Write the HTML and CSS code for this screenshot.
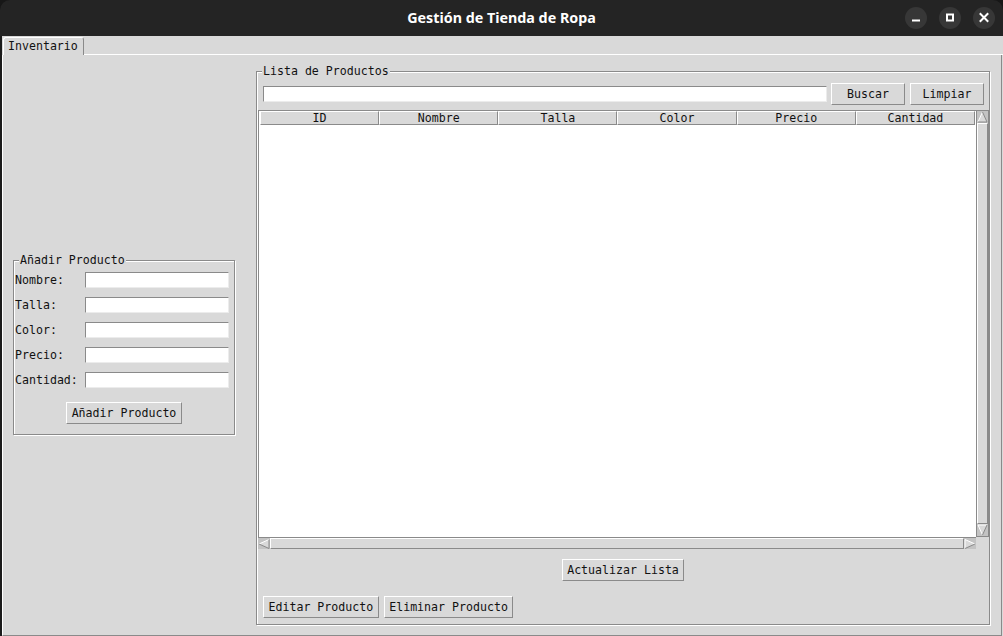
FILE: index.html
```html
<!DOCTYPE html>
<html lang="es">
<head>
<meta charset="utf-8">
<title>Gestión de Tienda de Ropa</title>
<link rel="stylesheet" href="styles.css">
</head>
<body>
<div class="window">
  <header class="titlebar">
    <div class="tb-spacer"></div>
    <div class="title">Gestión de Tienda de Ropa</div>
    <div class="controls">
      <span class="ctl"><svg width="22" height="22" viewBox="0 0 22 22"><rect x="7" y="12.5" width="8" height="2" fill="#fff"/></svg></span>
      <span class="ctl"><svg width="22" height="22" viewBox="0 0 22 22"><rect x="8" y="7.5" width="6" height="6" fill="none" stroke="#fff" stroke-width="2"/></svg></span>
      <span class="ctl"><svg width="22" height="22" viewBox="0 0 22 22"><path d="M7.5 7 L14.5 14 M14.5 7 L7.5 14" stroke="#fff" stroke-width="2" stroke-linecap="square"/></svg></span>
    </div>
  </header>
  <div class="body">
    <div class="tabbar">
      <div class="tab">Inventario</div>
      <div class="tabfill"></div>
    </div>
    <div class="pane">
      <div class="left-col">
        <section class="lframe add-frame">
          <div class="lframe-title">Añadir Producto</div>
          <div class="form-grid">
            <span class="lbl">Nombre:</span><div class="entry"></div>
            <span class="lbl">Talla:</span><div class="entry"></div>
            <span class="lbl">Color:</span><div class="entry"></div>
            <span class="lbl">Precio:</span><div class="entry"></div>
            <span class="lbl">Cantidad:</span><div class="entry"></div>
          </div>
          <div class="add-row"><button class="btn">Añadir Producto</button></div>
        </section>
      </div>
      <div class="right-col">
        <section class="lframe list-frame">
          <div class="lframe-title">Lista de Productos</div>
          <div class="search-row">
            <div class="entry search-entry"></div>
            <button class="btn btn-fixed">Buscar</button>
            <button class="btn btn-fixed btn-gap">Limpiar</button>
          </div>
          <div class="tree-wrap">
            <div class="tree">
              <div class="tree-head">
                <div class="th">ID</div>
                <div class="th">Nombre</div>
                <div class="th">Talla</div>
                <div class="th">Color</div>
                <div class="th">Precio</div>
                <div class="th">Cantidad</div>
              </div>
              <div class="tree-body"></div>
            </div>
            <div class="vscroll">
              <div class="arrow-box v"><svg width="11" height="12" viewBox="0 0 11 12"><polygon points="5.5,1 10,11 1,11" fill="#d9d9d9"/><path d="M1 11 L5.5 1" stroke="#fff" stroke-width="1"/><path d="M5.5 1 L10 11 L1 11" stroke="#8a8a8a" stroke-width="1" fill="none"/></svg></div>
              <div class="thumb"></div>
              <div class="arrow-box v"><svg width="11" height="12" viewBox="0 0 11 12"><polygon points="1,1 10,1 5.5,11" fill="#d9d9d9"/><path d="M5.5 11 L1 1 L10 1" stroke="#fff" stroke-width="1" fill="none"/><path d="M10 1 L5.5 11" stroke="#8a8a8a" stroke-width="1"/></svg></div>
            </div>
            <div class="hscroll">
              <div class="arrow-box h"><svg width="12" height="10" viewBox="0 0 12 10"><polygon points="1,5 11,0.5 11,9.5" fill="#d9d9d9"/><path d="M1 5 L11 0.5" stroke="#fff" stroke-width="1"/><path d="M11 0.5 L11 9.5 L1 5" stroke="#8a8a8a" stroke-width="1" fill="none"/></svg></div>
              <div class="thumb"></div>
              <div class="arrow-box h"><svg width="12" height="10" viewBox="0 0 12 10"><polygon points="1,0.5 11,5 1,9.5" fill="#d9d9d9"/><path d="M1 9.5 L1 0.5 L11 5" stroke="#fff" stroke-width="1" fill="none"/><path d="M11 5 L1 9.5" stroke="#8a8a8a" stroke-width="1"/></svg></div>
            </div>
            <div class="corner"></div>
          </div>
          <div class="center-row"><button class="btn">Actualizar Lista</button></div>
          <div class="action-row">
            <button class="btn">Editar Producto</button>
            <button class="btn">Eliminar Producto</button>
          </div>
        </section>
      </div>
    </div>
  </div>
</div>
</body>
</html>
```

FILE: styles.css
```css
* { box-sizing: border-box; }

html, body {
  margin: 0;
  padding: 0;
  background: #171717;
}

body {
  width: 1003px;
  height: 636px;
  overflow: hidden;
  font-family: "DejaVu Sans Mono", "Liberation Mono", monospace;
  font-size: 11.6px;
  color: #111;
}

.window {
  width: 1003px;
  height: 636px;
  display: flex;
  flex-direction: column;
}

/* ---------- title bar ---------- */
.titlebar {
  height: 36px;
  flex: none;
  background: #242424;
  border-radius: 10px 10px 0 0;
  display: grid;
  grid-template-columns: 1fr auto 1fr;
  align-items: center;
}

.title {
  font-family: "Noto Sans", "Open Sans", sans-serif;
  font-weight: bold;
  font-size: 14.3px;
  color: #ffffff;
  line-height: 18px;
  padding-bottom: 1px;
}

.controls {
  justify-self: end;
  display: flex;
  gap: 12px;
  padding-right: 8px;
  padding-bottom: 1px;
}

.ctl {
  width: 22px;
  height: 22px;
  border-radius: 50%;
  background: #373737;
  display: block;
}

.ctl svg { display: block; }

/* ---------- body ---------- */
.body {
  flex: 1;
  display: flex;
  flex-direction: column;
  background: #d9d9d9;
  border-left: 2px solid #1c1c1c;
}

.tabbar {
  height: 19px;
  flex: none;
  display: flex;
  padding-top: 1px;
}

.tab {
  height: 18px;
  margin-left: 1px;
  padding: 0 5px 0 4px;
  line-height: 17px;
  border-top: 1px solid #fff;
  border-left: 1px solid #fff;
  border-right: 1px solid #8a8a8a;
  border-radius: 3px 3px 0 0;
  background: #d9d9d9;
}

.tabfill {
  flex: 1;
  border-bottom: 1px solid #fff;
}

.pane {
  flex: 1;
  display: flex;
  margin-right: 1px;
  border-left: 1px solid #fff;
  border-right: 1px solid #8a8a8a;
  border-bottom: 1px solid #8a8a8a;
}

/* ---------- labelled frames ---------- */
.lframe {
  display: flex;
  flex-direction: column;
  border: 1px solid #8a8a8a;
  box-shadow: inset 1px 1px 0 #fff, 1px 1px 0 #fff;
}

.lframe-title {
  align-self: flex-start;
  margin: -8px 0 0 5px;
  padding: 0 1px;
  height: 14px;
  line-height: 14px;
  background: #d9d9d9;
  white-space: nowrap;
}

/* ---------- left column ---------- */
.left-col {
  width: 253px;
  flex: none;
  display: flex;
  align-items: center;
  padding-left: 10px;
}

.add-frame {
  width: 222px;
  margin-top: 5px;
  padding-bottom: 10px;
}

.form-grid {
  display: grid;
  grid-template-columns: 70px 144px;
  row-gap: 9px;
  margin-top: 5px;
  padding-left: 1px;
  align-items: center;
}

.lbl {
  line-height: 16px;
  white-space: nowrap;
}

.entry {
  height: 16px;
  background: #fff;
  border-top: 1px solid #8a8a8a;
  border-left: 1px solid #8a8a8a;
  border-bottom: 1px solid #ececec;
  border-right: 1px solid #ececec;
}

.add-row {
  margin-top: 14px;
  display: flex;
  justify-content: center;
}

/* ---------- buttons ---------- */
.btn {
  font: inherit;
  color: #111;
  height: 22px;
  padding: 0 4.5px;
  line-height: 20px;
  background: #d9d9d9;
  border: 1px solid;
  border-color: #fff #8a8a8a #8a8a8a #fff;
  border-radius: 0;
  white-space: nowrap;
}

.btn-fixed {
  width: 74px;
  flex: none;
  padding: 0;
}

.btn-gap { margin-left: 5px; }

/* ---------- right column ---------- */
.right-col {
  flex: 1;
  display: flex;
  padding: 16px 11px 10px 0;
}

.list-frame {
  flex: 1;
  padding-bottom: 6px;
}

.search-row {
  margin-top: 5px;
  height: 22px;
  display: flex;
  align-items: center;
  padding: 0 5px 0 6px;
}

.search-entry {
  flex: 1;
  margin-right: 4px;
}

.tree-wrap {
  flex: 1;
  margin: 5px 0 0 1px;
  display: grid;
  grid-template-columns: 1fr 13px;
  grid-template-rows: 1fr 12px;
  min-height: 0;
}

.tree {
  display: flex;
  flex-direction: column;
  background: #fff;
  border-top: 1px solid #8a8a8a;
  border-left: 1px solid #8a8a8a;
}

.tree-head {
  display: grid;
  grid-template-columns: repeat(6, 1fr);
  height: 14px;
  padding-left: 1px;
  padding-right: 1px;
}

.th {
  background: #d9d9d9;
  border: 1px solid;
  border-color: #fff #8a8a8a #8a8a8a #fff;
  text-align: center;
  line-height: 12px;
  white-space: nowrap;
  overflow: hidden;
}

.tree-body { flex: 1; }

.vscroll {
  display: flex;
  flex-direction: column;
  background: #c3c3c3;
  border: 1px solid #8a8a8a;
}

.hscroll {
  display: flex;
  background: #c3c3c3;
  border-top: 1px solid #8a8a8a;
}

.arrow-box {
  flex: none;
  background: #c3c3c3;
}

.arrow-box svg { display: block; }
.arrow-box.v { height: 12px; }
.arrow-box.h { width: 12px; padding-top: 1px; }

.thumb {
  flex: 1;
  background: #d9d9d9;
  border: 1px solid;
  border-color: #fff #8a8a8a #8a8a8a #fff;
}

.corner { background: #d9d9d9; }

.center-row {
  margin-top: 10px;
  display: flex;
  justify-content: center;
}

.action-row {
  margin-top: 15px;
  display: flex;
  gap: 5px;
  padding-left: 6px;
}
```
